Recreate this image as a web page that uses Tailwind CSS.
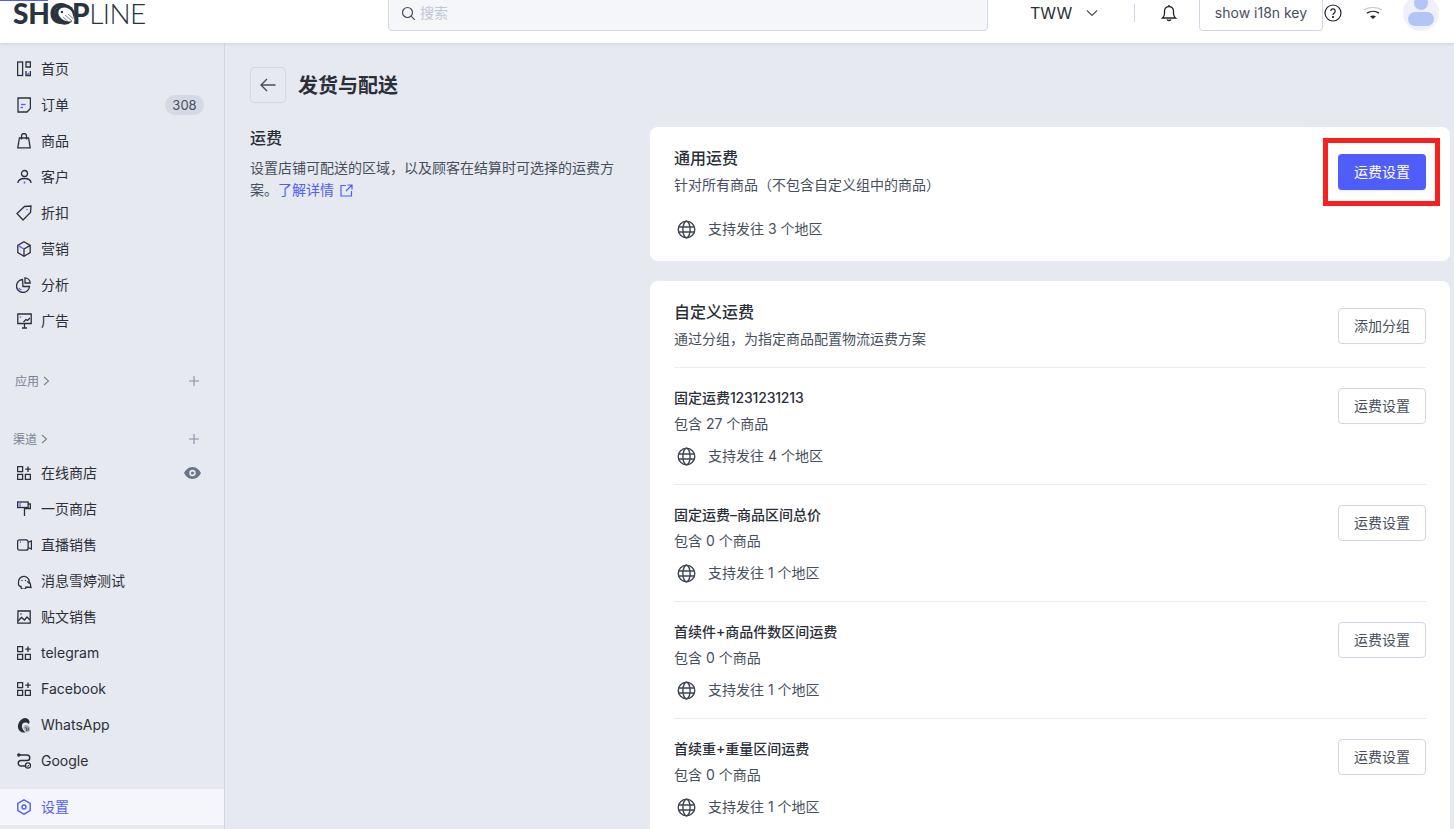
<!DOCTYPE html>
<html lang="zh">
<head>
<meta charset="utf-8">
<script src="https://cdn.jsdelivr.net/npm/@tailwindcss/browser@4"></script>
</head>
<body class="m-0">
<div class="w-[1454px] h-[829px] overflow-hidden flex flex-col bg-[#e6e9ef] text-[14px] text-[#2b2f3a] font-['Inter','Noto_Sans_CJK_SC',sans-serif]">

  <header class="relative z-10 h-[43px] shrink-0 bg-white shadow-[0_1px_3px_rgba(40,50,80,0.12)]">
    <div class="absolute left-0 top-0 w-[48px] h-px bg-[#4f5efa]"></div>
    <div class="flex items-center h-[36px] -mt-[5px] relative">
      <div class="w-[388px] pl-[13px] shrink-0 relative h-[36px] flex items-center">
        <span class="font-['Lato',sans-serif] text-[28px] leading-[36px] text-[#2a3340] font-black tracking-[-0.3px]">SHOP</span><span class="font-['Lato',sans-serif] text-[28px] leading-[36px] text-[#2a3340] font-light tracking-[-0.6px]">LINE</span>
        <svg class="absolute left-[52px] top-[9px]" width="25" height="21" viewBox="0 0 25 21"><circle cx="12.500" cy="10.500" r="10.300" fill="#2a3340"/><path d="M7 6C10 2 17 3 20 8L22.500 16.500C17 19 11 17 8 13 6 11 6 8 7 6z" fill="#fff"/><circle cx="10" cy="8" r="1.200" fill="#2a3340"/><path d="M13 11l7 6M11 13l5 4.500M16 10l5.500 5" stroke="#2a3340" stroke-width=".6" fill="none"/></svg>
      </div>
      <div class="w-[600px] h-[36px] shrink-0 bg-[#f5f6fa] border border-[#d3d6e6] rounded-[4px] flex items-center pl-[12px] gap-[4px]">
        <svg width="15" height="15" viewBox="0 0 15 15" fill="none" stroke="#474f5e" stroke-width="1.200"><circle cx="6.500" cy="6.500" r="5"/><path d="M10.200 10.200l3.600 3.600"/></svg>
        <span class="text-[14px] text-[#c2c6d3] mb-[2px]">搜索</span>
      </div>
      <span class="ml-[42px] text-[16px] text-[#2b2f3a] w-[41px]">TWW</span>
      <svg class="ml-[14px]" width="14" height="14" viewBox="0 0 14 14" fill="none" stroke="#474f5e" stroke-width="1.200"><path d="M2 4.500l5 5 5-5"/></svg>
      <div class="ml-[35px] w-px h-[18px] bg-[#d3d6e6]"></div>
      <svg class="ml-[26px]" width="16" height="18" viewBox="0 0 16 18" fill="none" stroke="#1f2430" stroke-width="1.300"><path d="M1.500 14h13c-1.400-1.300-2-2.500-2-4.500V7A4.500 4.500 0 0 0 3.500 7v2.500c0 2-.6 3.200-2 4.500z"/><path d="M8 1v1.500"/><path d="M6 15.500c.5 1.300 3.500 1.300 4 0" stroke-width="1.500"/></svg>
      <div class="ml-[22px] w-[124px] h-[36px] border border-[#d3d6e6] rounded-[4px] bg-white flex items-center justify-center pb-[2px] text-[14px] text-[#474f5e]">show i18n key</div>
      <svg class="ml-[1px]" width="18" height="18" viewBox="0 0 18 18" fill="none" stroke="#1f2430" stroke-width="1.200"><circle cx="9" cy="9" r="8"/><path d="M6.800 7a2.200 2.200 0 1 1 3.400 1.900c-.8.500-1.200 1-1.200 2"/><circle cx="9" cy="13" r=".5" fill="#1f2430"/></svg>
      <svg class="ml-[21px]" width="20" height="14" viewBox="0 0 20 14" fill="none"><path d="M1 4c5-3.500 13-3.500 18 0" stroke="#c9ccd6" stroke-width="1.200"/><path d="M4 7.200c3.500-2.400 8.500-2.400 12 0" stroke="#1f2430" stroke-width="1.400"/><path d="M7 10.200c1.800-1 4.200-1 6 0L10 13z" fill="#1f2430"/></svg>
      <div class="ml-[20px] w-[36px] h-[36px] rounded-full bg-[#eef1fb] overflow-hidden relative shrink-0">
        <div class="absolute left-[11px] top-[1px] w-[14px] h-[14px] rounded-full bg-[#b3c4f7]"></div>
        <div class="absolute left-[5px] top-[17px] w-[26px] h-[14px] rounded-[10px] bg-[#b3c4f7]"></div>
      </div>
    </div>
  </header>

  <div class="flex flex-1 min-h-0">
    <aside class="w-[225px] shrink-0 border-r border-[#d3d6e6] pt-[8px] text-[#2b2f3a]">
      <nav class="flex flex-col">
        <div class="h-[36px] flex items-center pl-[17px] gap-[10px]"><svg class="shrink-0" width="14" height="16" viewBox="0 0 14 16" fill="none" stroke="#2b2f3a" stroke-width="1.300"><rect x=".6" y="1" width="5" height="13.500"/><path d="M9 1h4.400v5H9zM13.400 10v4.500H9V10"/><path d="M10 14l2-2" stroke="#4f5efa"/></svg><span class="mb-[2px]">首页</span></div>
        <div class="h-[36px] flex items-center pl-[17px] gap-[10px]"><svg class="shrink-0" width="14" height="16" viewBox="0 0 14 16" fill="none" stroke="#2b2f3a" stroke-width="1.300"><path d="M1 1h12.400v10.500L10 15H1z"/><path d="M4 7.500h4.500" stroke="#4f5efa"/><path d="M3.500 10.500h2.500" stroke="#4f5efa"/></svg><span class="mb-[2px]">订单</span><span class="ml-auto mr-[20px] w-[39px] h-[20px] pt-[1px] rounded-full bg-[#d5d8e5] text-[#474f5e] text-[13px] flex items-center justify-center">308</span></div>
        <div class="h-[36px] flex items-center pl-[17px] gap-[10px]"><svg class="shrink-0" width="14" height="16" viewBox="0 0 14 16" fill="none" stroke="#2b2f3a" stroke-width="1.300"><path d="M2.400 5h9.200l1.600 9.800H.8z"/><path d="M4.500 6.500V3a2.500 2.500 0 0 1 5 0v3.500"/></svg><span class="mb-[2px]">商品</span></div>
        <div class="h-[36px] flex items-center pl-[17px] gap-[10px]"><svg class="shrink-0" width="15" height="16" viewBox="0 0 15 16" fill="none" stroke="#2b2f3a" stroke-width="1.300"><circle cx="7.500" cy="4.500" r="3"/><path d="M.8 14c.5-3 3-4.500 6.700-4.500s6.200 1.500 6.700 4.500"/><path d="M7.500 12.500v2" stroke="#4f5efa" stroke-width="1.600"/></svg><span class="mb-[2px] -ml-px">客户</span></div>
        <div class="h-[36px] flex items-center pl-[16px] gap-[9px]"><svg class="shrink-0" width="16" height="16" viewBox="0 0 16 16" fill="none" stroke="#2b2f3a" stroke-width="1.300"><path d="M1 8.500L8.500 1.500 15 1l-.5 6.500L7 15z"/><circle cx="11" cy="4.500" r=".7" fill="#4f5efa" stroke="none"/></svg><span class="mb-[2px]">折扣</span></div>
        <div class="h-[36px] flex items-center pl-[17px] gap-[10px]"><svg class="shrink-0" width="14" height="16" viewBox="0 0 14 16" fill="none" stroke="#2b2f3a" stroke-width="1.300"><path d="M7 .8l6.200 3.600v7.200L7 15.200.8 11.600V4.400z"/><path d="M7 8l6.200-3.600M7 8v7.200"/><path d="M.8 4.400L7 8" stroke="#4f5efa"/></svg><span class="mb-[2px]">营销</span></div>
        <div class="h-[36px] flex items-center pl-[16px] gap-[10px]"><svg class="shrink-0" width="15" height="16" viewBox="0 0 15 16" fill="none" stroke="#2b2f3a" stroke-width="1.300"><path d="M6.500 2a6.500 6.500 0 1 0 7 7H7z" transform="translate(0 .5)"/><path d="M9 .8a5.500 5.500 0 0 1 5.200 5.200H9z"/><path d="M3 11c.6 1 1.500 1.600 2.500 2" stroke="#4f5efa"/></svg><span class="mb-[2px]">分析</span></div>
        <div class="h-[36px] flex items-center pl-[17px] gap-[9px]"><svg class="shrink-0" width="15" height="16" viewBox="0 0 15 16" fill="none" stroke="#2b2f3a" stroke-width="1.300"><path d="M.8 1h13.400v9.500H.8z"/><path d="M7.500 10.500v4M5 15h5"/><path d="M6.500 9L9 6.500l1.500 1L13 5"/><circle cx="3.500" cy="4" r=".8" fill="#4f5efa" stroke="none"/></svg><span class="mb-[2px]">广告</span></div>
      </nav>

      <div class="mt-[30px] h-[24px] flex items-center pl-[15px] pr-[25px] text-[12px] text-[#7a8196]"><span class="mt-[2px]">应用</span><svg class="ml-[4px]" width="7" height="10" viewBox="0 0 7 10" fill="none" stroke="#7a8196" stroke-width="1.100"><path d="M1 1l4.500 4L1 9"/></svg><svg class="ml-auto" width="10" height="10" viewBox="0 0 10 10" stroke="#8a90a3" stroke-width="1.100"><path d="M5 0v10M0 5h10"/></svg></div>
      <div class="mt-[34px] h-[24px] flex items-center pl-[13px] pr-[25px] text-[12px] text-[#7a8196]"><span class="mt-[2px]">渠道</span><svg class="ml-[4px]" width="7" height="10" viewBox="0 0 7 10" fill="none" stroke="#7a8196" stroke-width="1.100"><path d="M1 1l4.500 4L1 9"/></svg><svg class="ml-auto" width="10" height="10" viewBox="0 0 10 10" stroke="#8a90a3" stroke-width="1.100"><path d="M5 0v10M0 5h10"/></svg></div>

      <nav class="mt-[4px] flex flex-col">
        <div class="h-[36px] flex items-center pl-[17px] gap-[10px]"><svg class="shrink-0" width="14" height="14" viewBox="0 0 14 14" fill="none" stroke="#2b2f3a" stroke-width="1.300"><rect x=".6" y=".6" width="5" height="5"/><rect x=".6" y="8.400" width="5" height="5"/><rect x="8.400" y="8.400" width="5" height="5"/><path d="M11 .5v5.500M8.300 3.200h5.400"/></svg><span class="mb-[2px]">在线商店</span><svg class="ml-auto mr-[23px]" width="17" height="12" viewBox="0 0 17 12"><path fill-rule="evenodd" fill="#6d7487" d="M8.500 0C12.500 0 15.500 3 17 6c-1.500 3-4.500 6-8.500 6S1.500 9 0 6c1.500-3 4.500-6 8.500-6zm0 2.800a3.200 3.200 0 1 0 0 6.400 3.200 3.200 0 0 0 0-6.400z"/><circle cx="8.500" cy="6" r="1.600" fill="#6d7487"/></svg></div>
        <div class="h-[36px] flex items-center pl-[17px] gap-[10px]"><svg class="shrink-0" width="14" height="16" viewBox="0 0 14 16" fill="none" stroke="#2b2f3a" stroke-width="1.300"><rect x=".6" y="1" width="10.500" height="5.500"/><path d="M1.500 2h2.500v4H1.500z" fill="#8b95f5" stroke="none"/><path d="M11 3h2.400v4.500H7.500V15"/></svg><span class="mb-[2px]">一页商店</span></div>
        <div class="h-[36px] flex items-center pl-[17px] gap-[9px]"><svg class="shrink-0" width="15" height="12" viewBox="0 0 15 12" fill="none" stroke="#2b2f3a" stroke-width="1.300"><rect x=".6" y=".8" width="10.500" height="10.400" rx="2"/><path d="M11 3.500l3.400-1.500v8L11 8.500"/><path d="M3 3h1" stroke="#4f5efa"/></svg><span class="mb-[2px]">直播销售</span></div>
        <div class="h-[36px] flex items-center pl-[17px] gap-[9px]"><svg class="shrink-0" width="15" height="15" viewBox="0 0 15 15" fill="none" stroke="#2b2f3a" stroke-width="1.300"><path d="M1.500 9a5.500 5.500 0 1 1 10.500 1"/><path d="M1.500 9c-.3 2.500 1 3.500 3 3.500"/><path d="M10 8a3 3 0 0 1 3.500 3.500l.5 2-5-.5a2.500 2.500 0 0 1-5-.5"/><circle cx="5" cy="6.500" r=".7" fill="#2b2f3a" stroke="none"/><circle cx="8.500" cy="6.500" r=".7" fill="#2b2f3a" stroke="none"/></svg><span class="mb-[2px]">消息雪婷测试</span></div>
        <div class="h-[36px] flex items-center pl-[17px] gap-[10px]"><svg class="shrink-0" width="14" height="14" viewBox="0 0 14 14" fill="none" stroke="#2b2f3a" stroke-width="1.300"><path d="M1 1h12.200v12.200H.8z"/><path d="M1 11l3.500-3.500 3 2.500 2.500-3 3 3"/><circle cx="4" cy="4" r=".8" fill="#2b2f3a" stroke="none"/></svg><span class="mb-[2px]">贴文销售</span></div>
        <div class="h-[36px] flex items-center pl-[17px] gap-[10px]"><svg class="shrink-0" width="14" height="14" viewBox="0 0 14 14" fill="none" stroke="#2b2f3a" stroke-width="1.300"><rect x=".6" y=".6" width="5" height="5"/><rect x=".6" y="8.400" width="5" height="5"/><rect x="8.400" y="8.400" width="5" height="5"/><path d="M11 .5v5.500M8.300 3.200h5.400"/></svg><span class="mb-[2px]">telegram</span></div>
        <div class="h-[36px] flex items-center pl-[17px] gap-[10px]"><svg class="shrink-0" width="14" height="14" viewBox="0 0 14 14" fill="none" stroke="#2b2f3a" stroke-width="1.300"><rect x=".6" y=".6" width="5" height="5"/><rect x=".6" y="8.400" width="5" height="5"/><rect x="8.400" y="8.400" width="5" height="5"/><path d="M11 .5v5.500M8.300 3.200h5.400"/></svg><span class="mb-[2px]">Facebook</span></div>
        <div class="h-[36px] flex items-center pl-[17px] gap-[10px]"><svg class="shrink-0" width="14" height="15" viewBox="0 0 14 15"><path fill="#2b2f3a" d="M7.500 0c3 0 4.500 1.500 5 3.500.2 1.500-.5 2-1 2.500-2-2-5.500-2-6.500 1-.5 2 .5 5 3.500 7.500C4 15 1.500 12.500 1 9.500.5 6 3 1 7.500 0z"/><path fill="#aab0bf" d="M9 7c2 0 4 1.500 4 4s-2 3.500-3 3.500S7 12 6.500 10 7.500 7 9 7z"/><path d="M8.500 9c1 1 1.500 2.500 1 4M11 9.500c.5 1 .5 2 0 3" stroke="#2b2f3a" fill="none" stroke-width=".8"/></svg><span class="mb-[2px]">WhatsApp</span></div>
        <div class="h-[36px] flex items-center pl-[17px] gap-[10px]"><svg class="shrink-0" width="14" height="16" viewBox="0 0 14 16" fill="none" stroke="#2b2f3a" stroke-width="1.500"><circle cx="1.800" cy="2" r="1" fill="#2b2f3a"/><path d="M2 2h8a2.500 2.500 0 0 1 0 5.500H4a2.500 2.500 0 0 0 0 5.500h4"/><circle cx="11" cy="12.500" r="2.600" stroke-width="1.200"/><path d="M9.800 12.500l1 1 1.500-1.800" stroke-width="1"/></svg><span class="mb-[2px]">Google</span></div>
      </nav>

      <div class="mt-[10px] h-[36px] flex items-center pl-[17px] gap-[10px] bg-[#f5f6fb] text-[#4f5efa]"><svg class="shrink-0" width="14" height="16" viewBox="0 0 14 16" fill="none" stroke="#4f5efa" stroke-width="1.400"><path d="M7 .8l6.200 3.600v7.200L7 15.200.8 11.600V4.400z"/><circle cx="7" cy="8" r="2"/></svg><span class="mb-[2px]">设置</span></div>
    </aside>

    <main class="flex-1 min-w-0 pl-[25px] pt-[24px]">
      <div class="flex items-center h-[36px] gap-[12px]">
        <div class="w-[36px] h-[36px] border border-[#d3d6e6] rounded-[4px] flex items-center justify-center"><svg width="16" height="14" viewBox="0 0 16 14" fill="none" stroke="#474f5e" stroke-width="1.400"><path d="M15.500 7H1M7 1L1 7l6 6"/></svg></div>
        <h1 class="text-[20px] font-semibold leading-[28px] text-[#2b2f3a] mt-[2px]">发货与配送</h1>
      </div>
      <div class="flex mt-[24px]">
        <section class="w-[400px] shrink-0 pr-[24px]">
          <h2 class="text-[16px] leading-[22px] font-medium text-[#2b2f3a]">运费</h2>
          <p class="mt-[8px] text-[14px] leading-[22px] text-[#474f5e]">设置店铺可配送的区域，以及顾客在结算时可选择的运费方案。<span class="text-[#4f5efa]">了解详情</span><svg class="inline-block ml-[6px] align-[-2px]" width="13" height="13" viewBox="0 0 13 13" fill="none" stroke="#4f5efa" stroke-width="1.200"><path d="M6 1.500H1v10.500h10.500V7M7.500 1h4.500v4.500M12 1L6 7"/></svg></p>
        </section>
        <div class="w-[800px] shrink-0 flex flex-col gap-[20px]">
          <div class="bg-white rounded-[8px] px-[24px] pt-[20px] pb-[23px] flex justify-between">
            <div>
              <h3 class="text-[16px] leading-[22px] font-medium text-[#2b2f3a]">通用运费</h3>
              <p class="mt-[6px] leading-[20px] text-[#474f5e]">针对所有商品（不包含自定义组中的商品）</p>
              <div class="mt-[23px] h-[20px] flex items-center gap-[12px] text-[#474f5e]"><svg class="shrink-0 ml-[3px] mt-[2px]" width="19" height="19" viewBox="0 0 19 19" fill="none" stroke="#3e4553" stroke-width="1.400"><circle cx="9.500" cy="9.500" r="8.300"/><ellipse cx="9.500" cy="9.500" rx="3.600" ry="8.300"/><path d="M1.500 7h16M1.500 12h16"/></svg><span>支持发往 3 个地区</span></div>
            </div>
            <div class="relative mt-[7px] self-start">
              <div class="w-[88px] h-[36px] rounded-[4px] bg-[#4f5efa] text-white flex items-center justify-center pb-[2px] shadow-[0_1px_2px_rgba(40,50,80,0.1)]">运费设置</div>
              <div class="absolute -left-[15px] -top-[16px] w-[117px] h-[68px] border-[5px] border-[#fb2020]"></div>
            </div>
          </div>

          <div class="bg-white rounded-[8px] px-[24px]">
            <div class="pt-[20px] pb-[18px] flex justify-between border-b border-[#e9ebf1]">
              <div>
                <h3 class="text-[16px] leading-[22px] font-medium">自定义运费</h3>
                <p class="mt-[6px] leading-[20px] text-[#474f5e]">通过分组，为指定商品配置物流运费方案</p>
              </div>
              <div class="mt-[7px] w-[88px] h-[36px] rounded-[4px] border border-[#d3d6e6] bg-white flex items-center justify-center pb-[2px] text-[#474f5e]">添加分组</div>
            </div>

            <div class="pt-[20px] pb-[19px] flex justify-between border-b border-[#e9ebf1]">
              <div>
                <h4 class="leading-[20px] font-medium">固定运费<span class="tracking-[-0.2px]">1231231213</span></h4>
                <p class="mt-[6px] leading-[20px] text-[#474f5e]">包含 27 个商品</p>
                <div class="mt-[11px] h-[20px] flex items-center gap-[12px] text-[#474f5e]"><svg class="shrink-0 ml-[3px] mt-[2px]" width="19" height="19" viewBox="0 0 19 19" fill="none" stroke="#3e4553" stroke-width="1.400"><circle cx="9.500" cy="9.500" r="8.300"/><ellipse cx="9.500" cy="9.500" rx="3.600" ry="8.300"/><path d="M1.500 7h16M1.500 12h16"/></svg><span>支持发往 4 个地区</span></div>
              </div>
              <div class="w-[88px] h-[36px] rounded-[4px] border border-[#d3d6e6] bg-white flex items-center justify-center pb-[2px] text-[#474f5e]">运费设置</div>
            </div>

            <div class="pt-[20px] pb-[19px] flex justify-between border-b border-[#e9ebf1]">
              <div>
                <h4 class="leading-[20px] font-medium">固定运费–商品区间总价</h4>
                <p class="mt-[6px] leading-[20px] text-[#474f5e]">包含 0 个商品</p>
                <div class="mt-[11px] h-[20px] flex items-center gap-[12px] text-[#474f5e]"><svg class="shrink-0 ml-[3px] mt-[2px]" width="19" height="19" viewBox="0 0 19 19" fill="none" stroke="#3e4553" stroke-width="1.400"><circle cx="9.500" cy="9.500" r="8.300"/><ellipse cx="9.500" cy="9.500" rx="3.600" ry="8.300"/><path d="M1.500 7h16M1.500 12h16"/></svg><span>支持发往 1 个地区</span></div>
              </div>
              <div class="w-[88px] h-[36px] rounded-[4px] border border-[#d3d6e6] bg-white flex items-center justify-center pb-[2px] text-[#474f5e]">运费设置</div>
            </div>

            <div class="pt-[20px] pb-[19px] flex justify-between border-b border-[#e9ebf1]">
              <div>
                <h4 class="leading-[20px] font-medium">首续件+商品件数区间运费</h4>
                <p class="mt-[6px] leading-[20px] text-[#474f5e]">包含 0 个商品</p>
                <div class="mt-[11px] h-[20px] flex items-center gap-[12px] text-[#474f5e]"><svg class="shrink-0 ml-[3px] mt-[2px]" width="19" height="19" viewBox="0 0 19 19" fill="none" stroke="#3e4553" stroke-width="1.400"><circle cx="9.500" cy="9.500" r="8.300"/><ellipse cx="9.500" cy="9.500" rx="3.600" ry="8.300"/><path d="M1.500 7h16M1.500 12h16"/></svg><span>支持发往 1 个地区</span></div>
              </div>
              <div class="w-[88px] h-[36px] rounded-[4px] border border-[#d3d6e6] bg-white flex items-center justify-center pb-[2px] text-[#474f5e]">运费设置</div>
            </div>

            <div class="pt-[20px] pb-[19px] flex justify-between">
              <div>
                <h4 class="leading-[20px] font-medium">首续重+重量区间运费</h4>
                <p class="mt-[6px] leading-[20px] text-[#474f5e]">包含 0 个商品</p>
                <div class="mt-[11px] h-[20px] flex items-center gap-[12px] text-[#474f5e]"><svg class="shrink-0 ml-[3px] mt-[2px]" width="19" height="19" viewBox="0 0 19 19" fill="none" stroke="#3e4553" stroke-width="1.400"><circle cx="9.500" cy="9.500" r="8.300"/><ellipse cx="9.500" cy="9.500" rx="3.600" ry="8.300"/><path d="M1.500 7h16M1.500 12h16"/></svg><span>支持发往 1 个地区</span></div>
              </div>
              <div class="w-[88px] h-[36px] rounded-[4px] border border-[#d3d6e6] bg-white flex items-center justify-center pb-[2px] text-[#474f5e]">运费设置</div>
            </div>
          </div>
        </div>
      </div>
    </main>
  </div>
</div>
</body>
</html>
